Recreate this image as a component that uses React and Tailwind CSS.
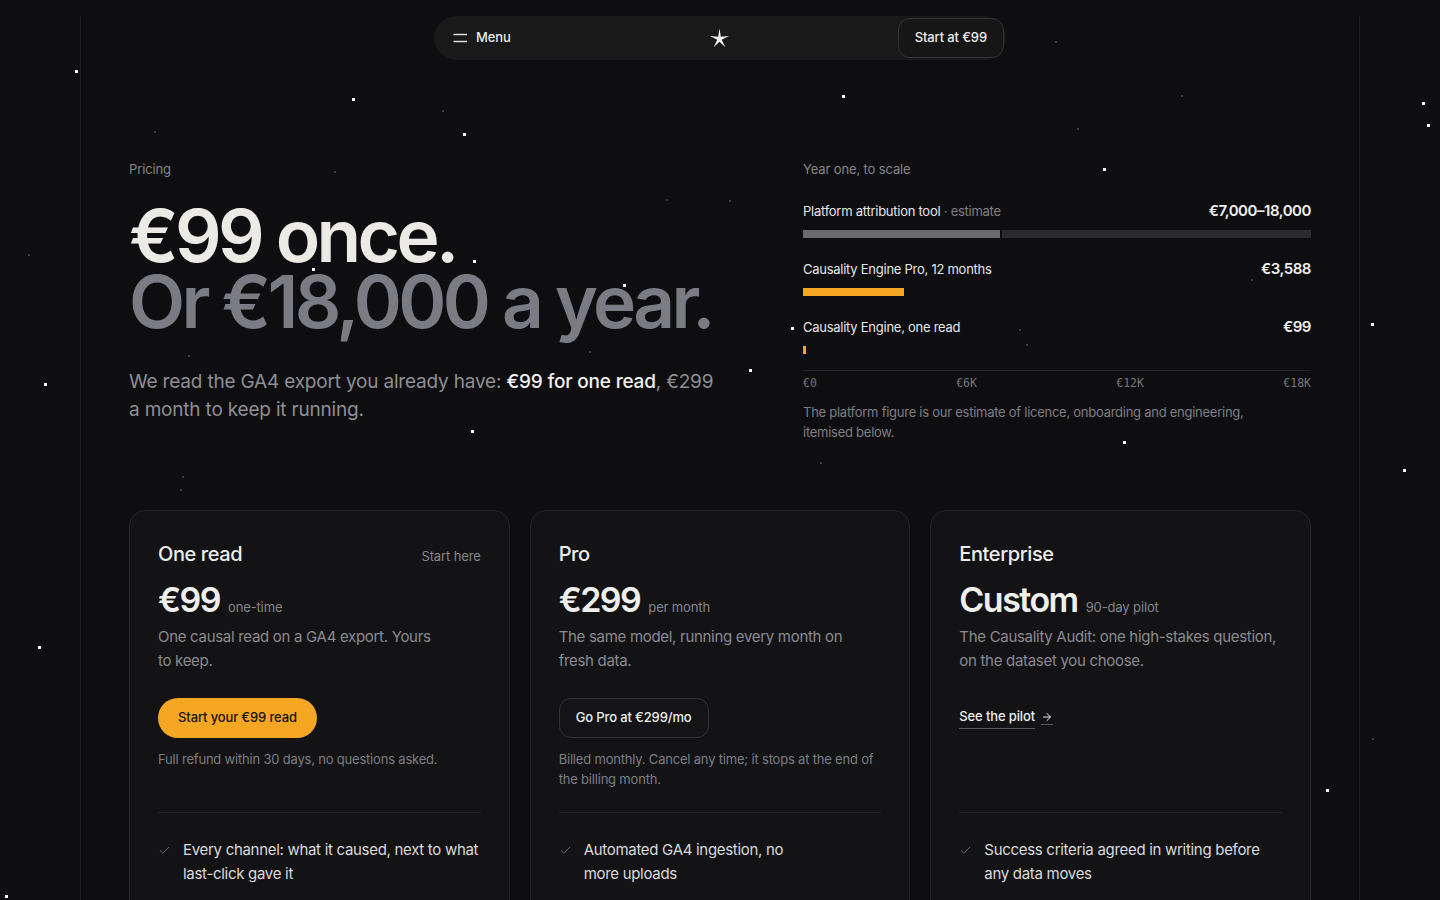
import { Check, ArrowRight } from "lucide-react";

const brightStars = [
  [76, 71], [353, 99], [464, 134], [843, 96], [1104, 169], [1423, 103], [1428, 125],
  [474, 261], [313, 269], [624, 285], [750, 370], [45, 384], [472, 431], [792, 328],
  [1372, 324], [1124, 442], [1404, 470], [39, 647], [1327, 790], [6, 896],
];

const dimStars = [
  [155, 132], [335, 172], [443, 111], [667, 200], [730, 201], [1078, 129], [1182, 96],
  [1056, 42], [29, 255], [189, 356], [590, 352], [1020, 330], [1027, 345], [821, 463],
  [183, 477], [181, 490], [1373, 739], [1252, 280],
];

const bars = [
  { label: "Platform attribution tool", sub: "· estimate", value: "€7,000–18,000", range: true },
  { label: "Causality Engine Pro, 12 months", value: "€3,588", width: 101 },
  { label: "Causality Engine, one read", value: "€99", width: 3 },
];

const plans = [
  {
    name: "One read",
    tag: "Start here",
    price: "€99",
    unit: "one-time",
    desc: "One causal read on a GA4 export. Yours to keep.",
    descWidth: "max-w-[280px]",
    featWidth: "",
    cta: "primary",
    ctaText: "Start your €99 read",
    note: "Full refund within 30 days, no questions asked.",
    features: [
      "Every channel: what it caused, next to what last-click gave it",
      "A written read you can forward to finance",
    ],
  },
  {
    name: "Pro",
    price: "€299",
    unit: "per month",
    desc: "The same model, running every month on fresh data.",
    descWidth: "max-w-[300px]",
    featWidth: "max-w-[215px]",
    cta: "outline",
    ctaText: "Go Pro at €299/mo",
    note: "Billed monthly. Cancel any time; it stops at the end of the billing month.",
    features: [
      "Automated GA4 ingestion, no more uploads",
      "Monthly read with drift alerts",
    ],
  },
  {
    name: "Enterprise",
    price: "Custom",
    unit: "90-day pilot",
    desc: "The Causality Audit: one high-stakes question, on the dataset you choose.",
    descWidth: "",
    featWidth: "",
    cta: "link",
    ctaText: "See the pilot",
    features: [
      "Success criteria agreed in writing before any data moves",
      "A named analyst on your data",
    ],
  },
];

const StarLogo = () => (
  <svg width="23" height="23" viewBox="0 0 24 24" fill="#f4f4f2">
    <path d="M12 1.6 L13.4 10.1 L21.9 9.5 L14.3 13.4 L18.2 21.1 L12 15.3 L5.8 21.1 L9.7 13.4 L2.1 9.5 L10.6 10.1 Z" />
  </svg>
);

const PlanCard = ({ plan }) => (
  <div className="rounded-2xl border border-[#242427] bg-[#131316] px-[28px] pt-[29px] pb-8">
    <div className="flex h-[272px] flex-col">
      <div className="flex items-baseline justify-between">
        <h3 className="text-[20px] leading-7 font-medium tracking-[-0.02em] text-[#ededeb]">{plan.name}</h3>
        {plan.tag && <span className="text-[13px] tracking-[-0.01em] text-[#86868c]">{plan.tag}</span>}
      </div>
      <div className="mt-[12px] flex items-baseline gap-2">
        <span className="text-[34px] leading-10 font-semibold tracking-[-0.045em] text-[#efefec]">{plan.price}</span>
        <span className="text-[13px] tracking-[-0.01em] text-[#86868c]">{plan.unit}</span>
      </div>
      <p className={`mt-[5px] text-[15px] leading-6 tracking-[-0.02em] text-[#8a8a90] ${plan.descWidth}`}>{plan.desc}</p>

      <div className="mt-[25px] flex h-10 items-center">
        {plan.cta === "primary" && (
          <button className="h-10 rounded-full bg-[#f5a623] px-5 text-[13px] font-medium tracking-[-0.01em] text-[#1a1206]">
            {plan.ctaText}
          </button>
        )}
        {plan.cta === "outline" && (
          <button className="h-10 rounded-xl border border-[#333336] bg-[#141417] px-4 text-[13px] font-medium tracking-[-0.01em] text-[#ededeb]">
            {plan.ctaText}
          </button>
        )}
        {plan.cta === "link" && (
          <a className="flex items-center gap-1.5 text-[13px] font-medium tracking-[-0.01em] text-[#ededeb]">
            <span className="border-b border-[#55555a] pb-[1px]">{plan.ctaText}</span>
            <span className="border-b border-[#55555a] pb-[1px]"><ArrowRight size={12} strokeWidth={2} /></span>
          </a>
        )}
      </div>
      {plan.note && <p className="mt-[11px] text-[13px] leading-5 tracking-[-0.015em] text-[#7d7d83]">{plan.note}</p>}
    </div>

    <div className="border-t border-[#242427] pt-[25px]">
      <ul className="flex flex-col gap-4">
        {plan.features.map((f) => (
          <li key={f} className="flex gap-3">
            <Check size={13} strokeWidth={1.5} className="mt-[6px] shrink-0 text-[#76767c]" />
            <span className={`text-[15px] leading-6 tracking-[-0.02em] text-[#dadadc] ${plan.featWidth}`}>{f}</span>
          </li>
        ))}
      </ul>
    </div>
  </div>
);

export default function App() {
  return (
    <div className="relative min-h-screen overflow-hidden bg-[#0e0e10]" style={{ fontFamily: "Inter, 'Noto Sans', sans-serif" }}>
      {/* stars */}
      {brightStars.map(([x, y]) => (
        <div key={`b${x}-${y}`} className="absolute h-[3px] w-[3px] bg-white" style={{ left: x - 1, top: y - 1 }} />
      ))}
      {dimStars.map(([x, y]) => (
        <div key={`d${x}-${y}`} className="absolute h-[2px] w-[2px] bg-[#3a3a3f]" style={{ left: x - 1, top: y - 1 }} />
      ))}

      <div className="relative mx-auto min-h-screen w-[1280px] border-x border-[#1e1e21] px-12 pb-24">
        {/* nav */}
        <nav className="mx-auto mt-4 grid h-11 w-[572px] grid-cols-3 items-center rounded-[22px] bg-[#19191a] p-[2px]">
          <div className="flex items-center gap-2 pl-[17px]">
            <svg width="15" height="10" viewBox="0 0 15 10" fill="none" stroke="#e6e6e6" strokeWidth="1.4">
              <line x1="0.5" y1="1.5" x2="14" y2="1.5" />
              <line x1="0.5" y1="8.5" x2="14" y2="8.5" />
            </svg>
            <span className="text-[13px] font-medium tracking-[-0.01em] text-[#e8e8e8]">Menu</span>
          </div>
          <div className="flex justify-center">
            <StarLogo />
          </div>
          <div className="flex justify-end">
            <button className="h-10 rounded-xl border border-[#333336] bg-[#161617] px-4 text-[13px] font-medium tracking-[-0.01em] text-[#ececec]">
              Start at €99
            </button>
          </div>
        </nav>

        {/* hero */}
        <section className="mt-[99px] flex items-start justify-between">
          <div className="w-[620px]">
            <p className="text-[13px] leading-5 tracking-[-0.01em] text-[#85858b]">Pricing</p>
            <h1 className="mt-6 text-[73px] leading-[66px] font-semibold tracking-[-0.05em]">
              <span className="block text-[#ebeae5]">€99 once.</span>
              <span className="block text-[#7b7b84]">Or €18,000 a year.</span>
            </h1>
            <p className="mt-[33px] max-w-[595px] text-[19px] leading-7 tracking-[-0.01em] text-[#8e8e94]">
              We read the GA4 export you already have: <span className="font-medium text-[#f2f2f0]">€99 for one read</span>, €299 a month to keep it running.
            </p>
          </div>

          <div className="w-[508px]">
            <p className="text-[13px] leading-5 tracking-[-0.01em] text-[#85858b]">Year one, to scale</p>
            <div className="mt-[22px] flex flex-col gap-[21px]">
              {bars.map((b) => (
                <div key={b.label}>
                  <div className="flex items-baseline justify-between">
                    <span className="text-[13px] leading-5 tracking-[-0.02em] text-[#e6e6e6]">
                      {b.label}
                      {b.sub && <span className="text-[#7e7e84]"> {b.sub}</span>}
                    </span>
                    <span className="text-[15px] leading-5 font-semibold tracking-[-0.03em] text-[#efefec]">{b.value}</span>
                  </div>
                  <div className="mt-[9px] flex h-2 gap-[2px]">
                    {b.range ? (
                      <>
                        <div className="w-[197px] bg-[#6a6a6d]" />
                        <div className="flex-1 bg-[#2b2b2e]" />
                      </>
                    ) : (
                      <div className="bg-[#f5a623]" style={{ width: b.width }} />
                    )}
                  </div>
                </div>
              ))}
            </div>
            <div className="mt-[16px] flex justify-between border-t border-[#222225] pt-[5px] text-[11.5px] leading-[14px] text-[#77777d]" style={{ fontFamily: "'DejaVu Sans Mono', 'Liberation Mono', monospace" }}>
              <span>€0</span>
              <span>€6K</span>
              <span>€12K</span>
              <span>€18K</span>
            </div>
            <p className="mt-[12px] max-w-[450px] text-[13px] leading-5 tracking-[-0.02em] text-[#7e7e84]">
              The platform figure is our estimate of licence, onboarding and engineering, itemised below.
            </p>
          </div>
        </section>

        {/* plans */}
        <section className="mt-[68px] grid grid-cols-3 gap-5">
          {plans.map((p) => (
            <PlanCard key={p.name} plan={p} />
          ))}
        </section>
      </div>
    </div>
  );
}
